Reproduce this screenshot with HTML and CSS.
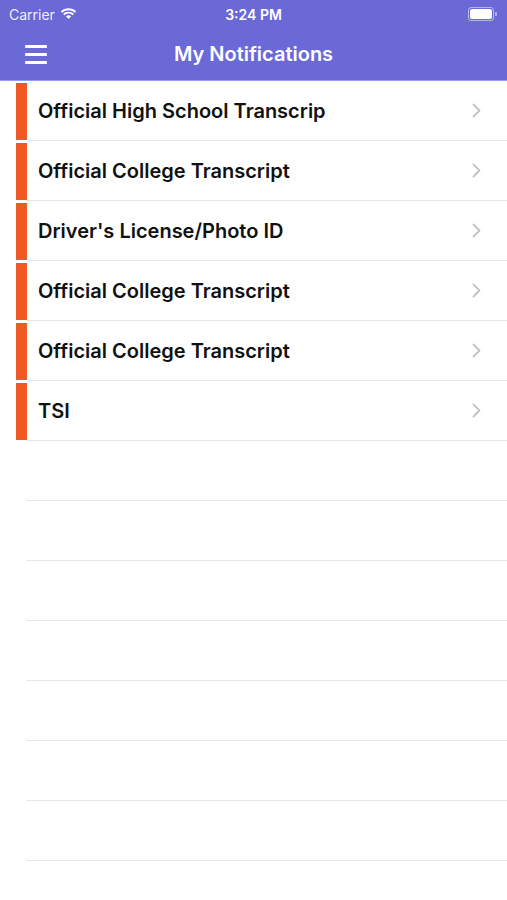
FILE: index.html
```html
<!DOCTYPE html>
<html lang="en">
<head>
  <meta charset="UTF-8" />
  <meta name="viewport" content="width=device-width, initial-scale=1" />
  <title>My Notifications</title>
  <link rel="stylesheet" href="styles.css">
</head>
<body>
  <!-- HEADER: status bar + nav bar -->
  <div class="header">
    <div class="status-bar">
      <div class="status-left">
        <span>Carrier</span>
        <svg class="wifi" width="17" height="12" viewBox="0 0 17 12">
          <path d="M8.5 2.2c2.5 0 4.7 1 6.4 2.6l1.3-1.4C14.2 1.5 11.5.3 8.5.3S2.8 1.5.8 3.4l1.3 1.4C3.8 3.2 6 2.2 8.5 2.2z" fill="#fff"/>
          <path d="M8.5 5.6c1.6 0 3 .6 4.1 1.6l1.3-1.4C12.5 4.5 10.6 3.7 8.5 3.7S4.5 4.5 3.1 5.8l1.3 1.4c1.1-1 2.5-1.6 4.1-1.6z" fill="#fff"/>
          <path d="M8.5 7.2c-1 0-1.9.4-2.6 1L8.5 11l2.6-2.8c-.7-.6-1.6-1-2.6-1z" fill="#fff"/>
        </svg>
      </div>
      <span class="status-time">3:24 PM</span>
      <div class="status-right">
        <div class="battery"><div class="battery-level"></div></div>
        <div class="battery-tip"></div>
      </div>
    </div>
    <div class="nav-bar">
      <div class="menu-btn">
        <span></span><span></span><span></span>
      </div>
      <h1>My Notifications</h1>
    </div>
  </div>

  <!-- NOTIFICATION LIST -->
  <div class="list" id="notification-list"></div>

  <script>
    const notifications = [
      'Official High School Transcrip',
      'Official College Transcript',
      "Driver's License/Photo ID",
      'Official College Transcript',
      'Official College Transcript',
      'TSI'
    ];

    const list = document.getElementById('notification-list');
    notifications.forEach(name => {
      const row = document.createElement('div');
      row.className = 'row';
      row.innerHTML = `
        <div class="flag"></div>
        <div class="row-body">
          <span class="row-title">${name}</span>
          <svg class="chevron" width="9" height="15" viewBox="0 0 9 15">
            <path d="M1.5 1.5l6 6-6 6" fill="none" stroke="#c4c4c7" stroke-width="1.8" stroke-linecap="round" stroke-linejoin="round"/>
          </svg>
        </div>
      `;
      list.appendChild(row);
    });

    // empty rows to fill the table
    for (let i = 0; i < 8; i++) {
      const empty = document.createElement('div');
      empty.className = 'row-empty';
      list.appendChild(empty);
    }
  </script>
</body>
</html>
```

FILE: styles.css
```css
body {
  margin: 0;
  font-family: Inter, "Noto Sans", "Liberation Sans", sans-serif;
  background-color: #fff;
  color: #111;
  height: 100vh;
  overflow: hidden;
}

.header {
  background-color: #6a69d6;
  color: #fff;
  border-bottom: 1px solid #9d9ce6;
}
.status-bar {
  height: 28px;
  display: flex;
  align-items: center;
  justify-content: space-between;
  padding: 0 9px;
  font-size: 14px;
  position: relative;
}
.status-left {
  display: flex;
  align-items: center;
  gap: 5px;
}
.status-left span {
  color: #eeeefa;
}
.status-time {
  position: absolute;
  left: 0;
  right: 0;
  text-align: center;
  font-weight: 600;
  pointer-events: none;
}
.status-right {
  display: flex;
  align-items: center;
  gap: 1px;
  margin-right: 1px;
}
.battery {
  width: 22px;
  height: 10px;
  border: 1px solid rgba(255, 255, 255, 0.5);
  border-radius: 3px;
  padding: 1px;
}
.battery-level {
  width: 100%;
  height: 100%;
  background-color: #fff;
  border-radius: 2px;
}
.battery-tip {
  width: 2px;
  height: 4px;
  background-color: rgba(255, 255, 255, 0.5);
  border-radius: 0 1px 1px 0;
}

.nav-bar {
  height: 52px;
  display: flex;
  align-items: center;
  position: relative;
  padding-left: 25px;
}
.menu-btn {
  display: flex;
  flex-direction: column;
  gap: 5px;
  width: 22px;
}
.menu-btn span {
  display: block;
  height: 3px;
  background-color: #fff;
  border-radius: 1px;
}
.nav-bar h1 {
  position: absolute;
  left: 0;
  right: 0;
  margin: 0;
  text-align: center;
  font-size: 20px;
  font-weight: 600;
  pointer-events: none;
}

.list {
  display: flex;
  flex-direction: column;
}
.row {
  height: 60px;
  display: flex;
  padding-left: 16px;
}
.flag {
  width: 11px;
  margin: 2px 0 1px 0;
  background-color: #f05a22;
}
.row-body {
  flex: 1;
  display: flex;
  align-items: center;
  padding: 0 26px 0 11px;
  border-bottom: 1px solid #e6e6e8;
}
.row-title {
  flex: 1;
  font-size: 20px;
  font-weight: 600;
  color: #111;
}
.row-empty {
  height: 59px;
  margin-left: 26px;
  border-bottom: 1px solid #e6e6e8;
}
```
